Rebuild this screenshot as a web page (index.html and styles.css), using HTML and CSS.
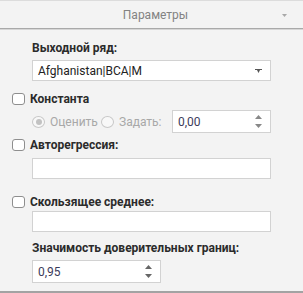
FILE: index.html
```html
<!DOCTYPE html>
<html>
<head>
<meta charset="utf-8">
<link rel="stylesheet" href="styles.css">
</head>
<body>
<div class="panel">
  <div class="header">
    <span class="title">Параметры</span>
    <svg class="hcaret" width="5" height="3" viewBox="0 0 5 3"><polygon points="0,0 5,0 2.5,3" fill="#a8a8a8"/></svg>
  </div>
  <div class="content">
    <div class="label l1">Выходной ряд:</div>
    <div class="field combo">
      <span class="val">Afghanistan|BCA|M</span>
      <svg class="carrow" width="7" height="4" viewBox="0 0 7 4"><polygon points="0,0 7,0 7,1 5,1 3.5,4 2,1 0,1" fill="#555"/></svg>
    </div>
    <div class="check r1"><span class="box"></span><span class="ctext">Константа</span></div>
    <div class="radios">
      <span class="radio on"></span><span class="rtext ra">Оценить</span>
      <span class="radio"></span><span class="rtext rb">Задать:</span>
      <div class="field spin s1">
        <span class="val">0,00</span>
        <svg class="sarrows" width="7" height="13" viewBox="0 0 7 13"><polygon points="3.5,0 7,4 0,4" fill="#888"/><polygon points="0,9 7,9 3.5,13" fill="#888"/></svg>
      </div>
    </div>
    <div class="check r2"><span class="box"></span><span class="ctext">Авторегрессия:</span></div>
    <div class="field text t1"></div>
    <div class="check r3"><span class="box"></span><span class="ctext">Скользящее среднее:</span></div>
    <div class="field text t2"></div>
    <div class="label l4">Значимость доверительных границ:</div>
    <div class="field spin s2">
      <span class="val">0,95</span>
      <svg class="sarrows" width="7" height="13" viewBox="0 0 7 13"><polygon points="3.5,0 7,4 0,4" fill="#666"/><polygon points="0,9 7,9 3.5,13" fill="#666"/></svg>
    </div>
  </div>
</div>
</body>
</html>
```
FILE: styles.css
```css
* { box-sizing: border-box; }
html, body { margin: 0; padding: 0; }
body {
  width: 303px;
  height: 293px;
  background: #f3f3f3;
  font-family: Roboto, "Open Sans", sans-serif;
  font-size: 12px;
  overflow: hidden;
}
.panel {
  width: 303px;
  height: 293px;
  border-top: 1px solid #dcdcdc;
  border-bottom: 2px solid #a3a3a3;
  display: flex;
  flex-direction: column;
}
.header {
  height: 28px;
  border-bottom: 1px solid #a9a9a9;
  box-shadow: 0 1px 0 #d6d6d6;
  display: flex;
  align-items: center;
  justify-content: center;
  position: relative;
  color: #828282;
  font-size: 12px;
}
.title { margin-left: 8px; }
.hcaret { position: absolute; right: 16px; top: 13px; }
.content {
  display: flex;
  flex-direction: column;
  padding-left: 32px;
}
.label {
  font-weight: bold;
  color: #2b2b2b;
  line-height: 15px;
  height: 15px;
}
.l1 { margin-top: 12px; }
.field {
  background: #fff;
  border: 1px solid #d2d2d2;
  display: flex;
  align-items: center;
  color: #222;
}
.combo {
  margin-top: 4px;
  width: 239px;
  height: 21px;
  padding-left: 5px;
  justify-content: space-between;
  padding-right: 8px;
}
.check {
  display: flex;
  align-items: center;
  height: 15px;
  margin-left: -20px;
}
.box {
  width: 13px;
  height: 12px;
  border: 1px solid #8e8e8e;
  border-radius: 3px;
  background: #fff;
  margin-right: 5px;
}
.ctext { font-weight: bold; color: #2b2b2b; }
.r1 { margin-top: 10px; }
.radios {
  margin-top: 4px;
  height: 23px;
  display: flex;
  align-items: center;
}
.radio {
  width: 13px;
  height: 12px;
  border: 1px solid #c8c8c8;
  border-radius: 50%;
  background: #f8f8f8;
  display: flex;
  align-items: center;
  justify-content: center;
  margin-right: 5px;
  flex: none;
}
.radio.on::after {
  content: "";
  width: 6px;
  height: 6px;
  border-radius: 50%;
  background: #c2c2c2;
}
.rtext { color: #a8a8a8; flex: none; }
.ra { width: 51px; }
.rb { width: 53px; }
.spin {
  height: 23px;
  padding-left: 5px;
  padding-right: 8px;
  justify-content: space-between;
}
.spin .val { color: #3b3b5b; }
.s1 { width: 99px; }
.r2 { margin-top: 4px; }
.text { height: 21px; width: 239px; }
.t1 { margin-top: 6px; }
.r3 { margin-top: 15px; }
.t2 { margin-top: 2px; }
.l4 { margin-top: 9px; }
.s2 { margin-top: 4px; width: 129px; }
```
